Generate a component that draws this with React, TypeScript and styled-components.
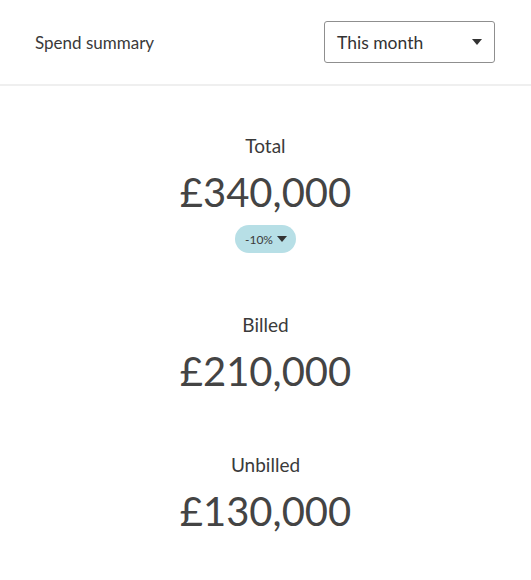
import styled, { createGlobalStyle } from 'styled-components';

const GlobalStyle = createGlobalStyle`
  body {
    margin: 0;
    background: #fff;
    font-family: Lato, "Noto Sans", sans-serif;
    color: #333;
  }
`

const Page = styled.div`
  width: 531px;
`

const Header = styled.header`
  height: 86px;
  display: flex;
  align-items: center;
  justify-content: space-between;
  padding: 0 35px;
  box-sizing: border-box;
  border-bottom: 2px solid #efefef;
`

const Title = styled.h1`
  margin: 0;
  font-size: 17px;
  font-weight: normal;
  color: #3a3a3a;
`

const Select = styled.div`
  width: 171px;
  height: 42px;
  box-sizing: border-box;
  border: 1px solid #8f8f8f;
  border-radius: 3px;
  display: flex;
  align-items: center;
  justify-content: space-between;
  padding: 0 12px;
  font-size: 17.5px;
  color: #333;
  position: relative;
  left: -1px;
`

const Caret = styled.span<{ $size: number }>`
  width: 0;
  height: 0;
  border-left: ${p => p.$size}px solid transparent;
  border-right: ${p => p.$size}px solid transparent;
  border-top: ${p => p.$size * 1.2}px solid #333;
`

const Content = styled.main`
  padding-top: 49px;
  display: flex;
  flex-direction: column;
  align-items: center;
`

const Stat = styled.section`
  display: flex;
  flex-direction: column;
  align-items: center;
  margin-bottom: 57px;
`

const Label = styled.div`
  font-size: 19px;
  line-height: 22px;
  color: #3a3a3a;
`

const Amount = styled.div`
  margin-top: 9px;
  font-size: 40px;
  line-height: 52px;
  color: #444;
`

const Pill = styled.div`
  margin-top: 7px;
  margin-bottom: 4px;
  height: 28px;
  padding: 0 9px 0 10px;
  border-radius: 14px;
  background: #b7dfe6;
  display: flex;
  align-items: center;
  gap: 4px;
  font-size: 12px;
  color: #3a3a3a;
`

export default function App() {
  return (
    <Page>
      <GlobalStyle />
      <Header>
        <Title>Spend summary</Title>
        <Select>
          This month
          <Caret $size={5} />
        </Select>
      </Header>
      <Content>
        <Stat>
          <Label>Total</Label>
          <Amount>£340,000</Amount>
          <Pill>
            -10%
            <Caret $size={5} />
          </Pill>
        </Stat>
        <Stat>
          <Label>Billed</Label>
          <Amount>£210,000</Amount>
        </Stat>
        <Stat>
          <Label>Unbilled</Label>
          <Amount>£130,000</Amount>
        </Stat>
      </Content>
    </Page>
  )
}
